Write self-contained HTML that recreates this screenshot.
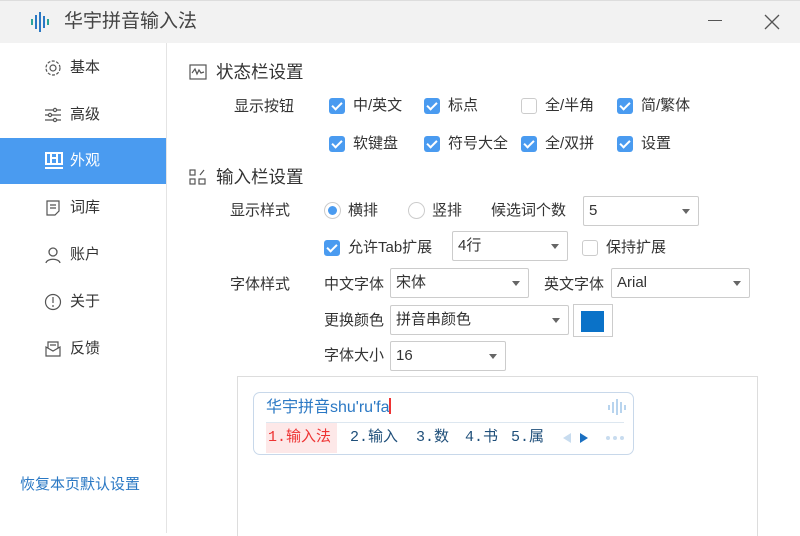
<!DOCTYPE html>
<html><head><meta charset="utf-8"><style>
*{margin:0;padding:0;box-sizing:border-box}
body{width:800px;height:533px;overflow:hidden;background:#fff;font-family:"Liberation Sans","Noto Sans CJK SC",sans-serif;font-size:15px;color:#333;position:relative}
.a{position:absolute;white-space:nowrap;line-height:18px}
.title{left:0;top:0;width:800px;height:43px;background:#f2f2f2;border-top:1px solid #ddd}
.side{left:0;top:43px;width:167px;height:490px;border-right:1px solid #e4e4e4}
.item{position:absolute;left:0;width:166px;height:46px;line-height:46px;padding-left:70px;font-size:15px;color:#333}
.item svg{position:absolute;left:44px;top:14px}
.sel{background:#4a9bf0;color:#fff}
.cb{position:absolute;width:16px;height:16px;border-radius:3px;background:#4a9bf0}
.cb:after{content:"";position:absolute;left:5px;top:2px;width:4px;height:8px;border:solid #fff;border-width:0 2px 2px 0;transform:rotate(45deg)}
.ucb{position:absolute;width:16px;height:16px;border-radius:3px;border:1px solid #ccc;background:#fff}
.sel2{position:absolute;height:30px;border:1px solid #ccc;border-radius:2px;background:#fff;padding-left:5px;line-height:28px;font-size:15px}
.sel2:after{content:"";position:absolute;right:8px;top:12px;border:4px solid transparent;border-top:5px solid #666}
</style></head><body>
<div class="a title"></div>
<svg class="a" style="left:30px;top:12px" width="24" height="20"><g stroke-width="2"><line x1="2" y1="7" x2="2" y2="13" stroke="#2aa39a"/><line x1="6" y1="3" x2="6" y2="17" stroke="#2a78c4"/><line x1="10" y1="0" x2="10" y2="20" stroke="#2a78c4"/><line x1="14" y1="4" x2="14" y2="16" stroke="#2a78c4"/><line x1="18" y1="7" x2="18" y2="13" stroke="#2aa39a"/></g></svg>
<div class="a" style="left:64px;top:11px;font-size:19px;line-height:22px;color:#444">华宇拼音输入法</div>
<div class="a" style="left:708px;top:20px;width:14px;height:1px;background:#555"></div>
<svg class="a" style="left:764px;top:14px" width="16" height="16"><path d="M1 1L15 15M15 1L1 15" stroke="#555" stroke-width="1.3"/></svg>
<div class="a side">
<div class="item" style="top:2px"><svg width="18" height="18" fill="none" stroke="#555" stroke-width="1.2"><circle cx="9" cy="9" r="3"/><circle cx="9" cy="9" r="7" stroke-dasharray="3 1.5"/></svg>基本</div>
<div class="item" style="top:49px"><svg width="18" height="18" stroke="#555" stroke-width="1.2" fill="#fff"><path d="M1 4H17M1 9H17M1 14H17"/><circle cx="11" cy="4" r="1.6"/><circle cx="6" cy="9" r="1.6"/><circle cx="11" cy="14" r="1.6"/></svg>高级</div>
<div class="item sel" style="top:95px"><svg width="20" height="18" fill="none" stroke="#fff" stroke-width="2"><rect x="2" y="1" width="16" height="11"/><path d="M7 1V12M13 1V12M7 6H13M1 16H19"/></svg>外观</div>
<div class="item" style="top:142px"><svg width="18" height="18" fill="none" stroke="#555" stroke-width="1.2"><path d="M3 2H15V12L11 16H3Z M6 6H12M6 9H12"/></svg>词库</div>
<div class="item" style="top:189px"><svg width="18" height="18" fill="none" stroke="#555" stroke-width="1.3"><circle cx="9" cy="6" r="4"/><path d="M2 17C3 12 15 12 16 17"/></svg>账户</div>
<div class="item" style="top:236px"><svg width="18" height="18" fill="none" stroke="#555" stroke-width="1.2"><circle cx="9" cy="9" r="7.5"/><path d="M9 4V10M9 12V14"/></svg>关于</div>
<div class="item" style="top:283px"><svg width="18" height="18" fill="none" stroke="#555" stroke-width="1.2"><path d="M2 7V16H16V7L9 11Z M4 8V2H14V8 M6 5H12"/></svg>反馈</div>
<div class="a" style="left:20px;top:433px;color:#2a78c4;font-size:15px">恢复本页默认设置</div>
</div>
<svg class="a" style="left:189px;top:64px" width="18" height="16" fill="none" stroke="#555" stroke-width="1.2"><rect x="1" y="1" width="16" height="14"/><path d="M3 9L6 5L8 10L10 6L12 9L15 8"/></svg>
<div class="a" style="left:216px;top:62px;font-size:17.5px;line-height:20px">状态栏设置</div>
<div class="a" style="left:234px;top:98px">显示按钮</div>
<div class="cb" style="left:329px;top:98px"></div><div class="a" style="left:353px;top:97px">中/英文</div>
<div class="cb" style="left:424px;top:98px"></div><div class="a" style="left:448px;top:97px">标点</div>
<div class="ucb" style="left:521px;top:98px"></div><div class="a" style="left:545px;top:97px">全/半角</div>
<div class="cb" style="left:617px;top:98px"></div><div class="a" style="left:641px;top:97px">简/繁体</div>
<div class="cb" style="left:329px;top:136px"></div><div class="a" style="left:353px;top:135px">软键盘</div>
<div class="cb" style="left:424px;top:136px"></div><div class="a" style="left:448px;top:135px">符号大全</div>
<div class="cb" style="left:521px;top:136px"></div><div class="a" style="left:545px;top:135px">全/双拼</div>
<div class="cb" style="left:617px;top:136px"></div><div class="a" style="left:641px;top:135px">设置</div>
<svg class="a" style="left:189px;top:169px" width="18" height="16" fill="none" stroke="#555" stroke-width="1.2"><rect x="1" y="1" width="5" height="5"/><rect x="1" y="10" width="5" height="5"/><rect x="10" y="10" width="6" height="5"/><path d="M11 6L15 1"/></svg>
<div class="a" style="left:216px;top:167px;font-size:17.5px;line-height:20px">输入栏设置</div>
<div class="a" style="left:230px;top:202px">显示样式</div>
<div class="a" style="left:324px;top:202px;width:17px;height:17px;border-radius:50%;border:1px solid #ccc"><div style="position:absolute;left:3px;top:3px;width:9px;height:9px;border-radius:50%;background:#4a9bf0"></div></div>
<div class="a" style="left:348px;top:202px">横排</div>
<div class="a" style="left:408px;top:202px;width:17px;height:17px;border-radius:50%;border:1px solid #ccc"></div>
<div class="a" style="left:432px;top:202px">竖排</div>
<div class="a" style="left:491px;top:202px">候选词个数</div>
<div class="sel2" style="left:583px;top:196px;width:116px">5</div>
<div class="cb" style="left:324px;top:240px"></div><div class="a" style="left:348px;top:239px">允许Tab扩展</div>
<div class="sel2" style="left:452px;top:231px;width:116px">4行</div>
<div class="ucb" style="left:582px;top:240px"></div><div class="a" style="left:606px;top:239px">保持扩展</div>
<div class="a" style="left:230px;top:276px">字体样式</div>
<div class="a" style="left:324px;top:276px">中文字体</div>
<div class="sel2" style="left:390px;top:268px;width:139px">宋体</div>
<div class="a" style="left:544px;top:276px">英文字体</div>
<div class="sel2" style="left:611px;top:268px;width:139px">Arial</div>
<div class="a" style="left:324px;top:312px">更换颜色</div>
<div class="sel2" style="left:390px;top:305px;width:179px">拼音串颜色</div>
<div class="a" style="left:573px;top:304px;width:40px;height:33px;border:1px solid #ccc"><div style="position:absolute;left:7px;top:6px;width:23px;height:21px;background:#0a72c8"></div></div>
<div class="a" style="left:324px;top:347px">字体大小</div>
<div class="sel2" style="left:390px;top:341px;width:116px">16</div>
<div class="a" style="left:237px;top:376px;width:521px;height:160px;border:1px solid #ddd;border-bottom:none"></div>
<div class="a" style="left:253px;top:392px;width:381px;height:63px;border:1px solid #c8d8ea;border-radius:7px;background:#fff"></div>
<div class="a" style="left:266px;top:398px;font-size:16px;color:#2a78c4">华宇拼音shu'ru'fa<span style="display:inline-block;width:2px;height:16px;background:#e33;vertical-align:-2px"></span></div>
<svg class="a" style="left:607px;top:398px" width="20" height="18"><g stroke="#b8d4ee" stroke-width="2"><line x1="2" y1="7" x2="2" y2="12"/><line x1="6" y1="4" x2="6" y2="15"/><line x1="10" y1="1" x2="10" y2="17"/><line x1="14" y1="4" x2="14" y2="15"/><line x1="18" y1="7" x2="18" y2="12"/></g></svg>
<div class="a" style="left:266px;top:422px;width:358px;height:1px;background:#dde7f0"></div>
<div class="a" style="left:266px;top:423px;width:71px;height:30px;background:#fde8e8"></div>
<div class="a" style="left:268px;top:429px;font-size:15px;color:#e33;font-family:'Liberation Mono','Noto Sans CJK SC',monospace">1.输入法</div>
<div class="a" style="left:350px;top:429px;font-size:15px;color:#1f4f7a;font-family:'Liberation Mono','Noto Sans CJK SC',monospace">2.输入</div>
<div class="a" style="left:416px;top:429px;font-size:15px;color:#1f4f7a;font-family:'Liberation Mono','Noto Sans CJK SC',monospace">3.数</div>
<div class="a" style="left:465px;top:429px;font-size:15px;color:#1f4f7a;font-family:'Liberation Mono','Noto Sans CJK SC',monospace">4.书</div>
<div class="a" style="left:511px;top:429px;font-size:15px;color:#1f4f7a;font-family:'Liberation Mono','Noto Sans CJK SC',monospace">5.属</div>
<svg class="a" style="left:560px;top:432px" width="66" height="12"><path d="M11 1L3 6L11 11Z" fill="#c8dcef"/><path d="M20 1L28 6L20 11Z" fill="#1a6fc0"/><circle cx="48" cy="6" r="2" fill="#c8dcef"/><circle cx="55" cy="6" r="2" fill="#c8dcef"/><circle cx="62" cy="6" r="2" fill="#c8dcef"/></svg>
</body></html>
